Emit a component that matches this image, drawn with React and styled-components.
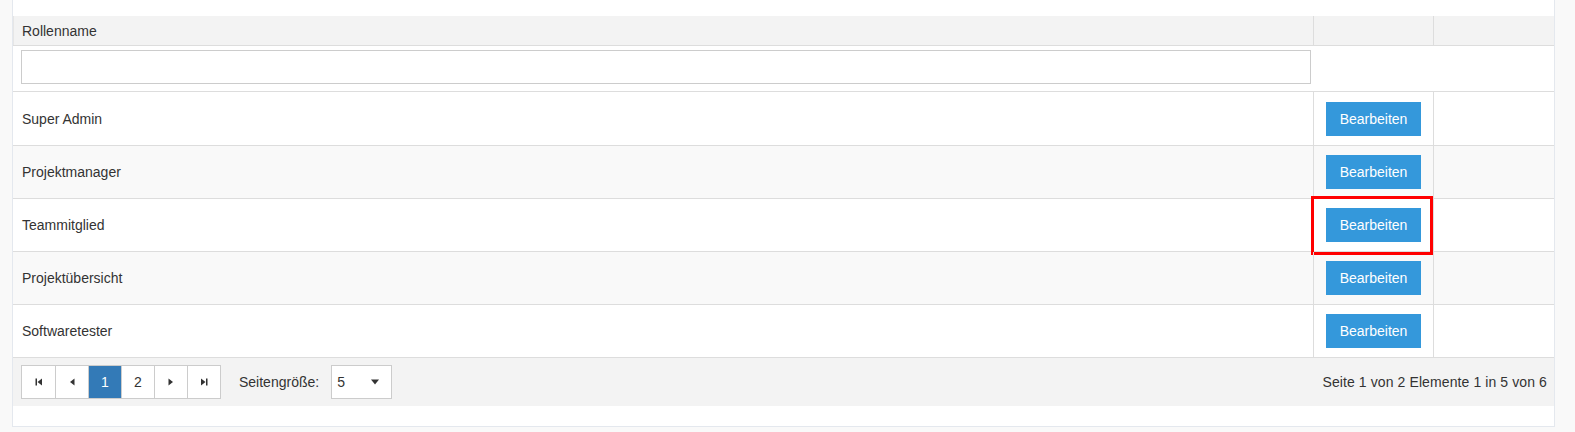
import React from "react";
import styled, { createGlobalStyle } from "styled-components";

const Global = createGlobalStyle`
  html, body { margin: 0; padding: 0; background: #f9f9f9; }
  body { font-family: "Liberation Sans", Arial, sans-serif; font-size: 14px; color: #333; }
  * { box-sizing: border-box; }
`;

const Panel = styled.div`
  margin-left: 12px;
  width: 1543px;
  height: 427px;
  background: #fff;
  border-left: 1px solid #e4e8ee;
  border-right: 1px solid #e4e8ee;
  border-bottom: 1px solid #e4e8ee;
  padding-top: 16px;
`;

const Row = styled.div`
  display: grid;
  grid-template-columns: 1300px 120px 1fr;
  height: ${(p) => p.$h}px;
  background: ${(p) => p.$bg || "#fff"};
  border-bottom: 1px solid #ddd;
`;

const HeadCell = styled.div`
  display: flex;
  align-items: center;
  padding-left: 8px;
  border-left: 1px solid ${(p) => (p.$first ? "#e6e6e6" : "#ddd")};
`;

const Cell = styled.div`
  position: relative;
  display: flex;
  align-items: center;
  padding-left: ${(p) => p.$pl ?? 9}px;
  border-left: ${(p) => (p.$line ? "1px solid #ddd" : "none")};
`;

const FilterCell = styled.div`
  padding: 4px 2px 0 8px;
`;

const FilterInput = styled.input`
  width: 1290px;
  height: 34px;
  border: 1px solid #ccc;
  background: #fff;
  outline: none;
  padding: 0 8px;
  font: inherit;
`;

const EditButton = styled.button`
  width: 95px;
  height: 34px;
  border: none;
  background: #3498db;
  color: #fff;
  font-family: "Liberation Sans", Arial, sans-serif;
  font-size: 14px;
  padding: 0;
  cursor: pointer;
`;

const Highlight = styled.div`
  position: absolute;
  left: -3px;
  top: -3px;
  right: 0;
  bottom: -4px;
  border: 3px solid #ff0000;
  pointer-events: none;
`;

const Pager = styled.div`
  display: flex;
  align-items: center;
  height: 48px;
  background: #f3f3f3;
  padding: 0 7px 0 8px;
`;

const PageButtons = styled.div`
  display: flex;
  height: 34px;
  border: 1px solid #ccc;
  background: #fff;
`;

const PageBtn = styled.div`
  width: ${(p) => (p.$first ? 33 : 33)}px;
  height: 100%;
  display: flex;
  align-items: center;
  justify-content: center;
  border-left: ${(p) => (p.$first ? "none" : "1px solid #ccc")};
  background: ${(p) => (p.$active ? "#337ab7" : "#fff")};
  color: ${(p) => (p.$active ? "#fff" : "#333")};
  font-size: 14px;
`;

const SizeLabel = styled.span`
  margin-left: 18px;
  margin-right: 12px;
`;

const SizeSelect = styled.div`
  width: 61px;
  height: 34px;
  border: 1px solid #ccc;
  background: #fff;
  display: flex;
  align-items: center;
  justify-content: space-between;
  padding: 0 12px 0 5px;
`;

const Info = styled.span`
  margin-left: auto;
  letter-spacing: 0.1px;
`;

const Tri = ({ dir, bar }) => (
  <svg width="8" height="8" viewBox="0 0 8 8">
    {dir === "left" ? (
      <>
        {bar && <rect x="0.5" y="0.5" width="1.5" height="7" fill="#333" />}
        <polygon points={bar ? "7,0.5 2.5,4 7,7.5" : "6.5,0.5 2,4 6.5,7.5"} fill="#333" />
      </>
    ) : (
      <>
        <polygon points={bar ? "1,0.5 5.5,4 1,7.5" : "1.5,0.5 6,4 1.5,7.5"} fill="#333" />
        {bar && <rect x="6" y="0.5" width="1.5" height="7" fill="#333" />}
      </>
    )}
  </svg>
);

const roles = ["Super Admin", "Projektmanager", "Teammitglied", "Projektübersicht", "Softwaretester"];

export default function App() {
  return (
    <>
      <Global />
      <Panel>
        <Row $h={30} $bg="#f3f3f3">
          <HeadCell $first>Rollenname</HeadCell>
          <HeadCell />
          <HeadCell />
        </Row>
        <Row $h={46}>
          <FilterCell>
            <FilterInput />
          </FilterCell>
          <div />
          <div />
        </Row>
        {roles.map((r, i) => (
          <Row key={r} $h={i === 0 ? 54 : 53} $bg={i % 2 === 1 ? "#f9f9f9" : "#fff"}>
            <Cell $pl={9}>{r}</Cell>
            <Cell $line $pl={12}>
              <EditButton>Bearbeiten</EditButton>
              {i === 2 && <Highlight />}
            </Cell>
            <Cell $line />
          </Row>
        ))}
        <Pager>
          <PageButtons>
            <PageBtn $first><Tri dir="left" bar /></PageBtn>
            <PageBtn><Tri dir="left" /></PageBtn>
            <PageBtn $active>1</PageBtn>
            <PageBtn>2</PageBtn>
            <PageBtn><Tri dir="right" /></PageBtn>
            <PageBtn><Tri dir="right" bar /></PageBtn>
          </PageButtons>
          <SizeLabel>Seitengröße:</SizeLabel>
          <SizeSelect>
            <span>5</span>
            <svg width="8" height="6" viewBox="0 0 8 6">
              <polygon points="0,0.5 8,0.5 4,5.5" fill="#333" />
            </svg>
          </SizeSelect>
          <Info>Seite 1 von 2 Elemente 1 in 5 von 6</Info>
        </Pager>
      </Panel>
    </>
  );
}
